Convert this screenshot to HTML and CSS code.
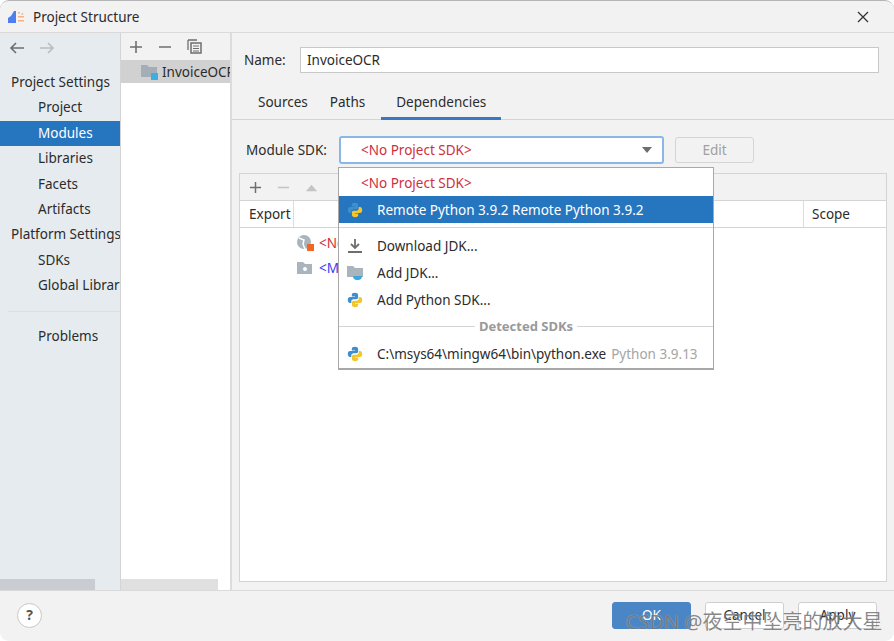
FILE: index.html
```html
<!DOCTYPE html>
<html lang="en">
<head>
    <meta charset="UTF-8">
    <meta name="viewport" content="width=device-width, initial-scale=1.0">
    <title>Project Structure</title>
    <link rel="stylesheet" href="styles.css">
</head>
<body>
    <svg class="defs" width="0" height="0">
        <symbol id="py" viewBox="0 0 16 16">
            <path fill="#3d8fd0" d="M8 .8C5.7.8 4.8 1.7 4.8 3v1.4H8V5H3C1.7 5 .8 6.2.8 8s.9 3 2.2 3h1.3V9.4c0-1.2 1-2.2 2.2-2.2h3c.9 0 1.6-.7 1.6-1.6V3C10.900 1.700 10 .8 8 .8z"/>
            <path fill="#f5c52c" transform="rotate(180 8 8)" d="M8 .8C5.700.8 4.800 1.700 4.800 3v1.400H8V5H3C1.700 5 .8 6.200.8 8s.9 3 2.200 3h1.300V9.400c0-1.200 1-2.200 2.200-2.200h3c.9 0 1.600-.7 1.600-1.600V3C10.900 1.700 10 .8 8 .8z"/>
        </symbol>
    </svg>

    <div class="window">
        <div class="titlebar">
            <svg class="app-icon" width="18" height="14" viewBox="0 0 18 14">
                <path fill="#4d7ff0" d="M1 13V8l3-2 3-5h2v12z"/>
                <path fill="#f4b183" d="M11 2h2v1.500h-2zM14 4l2-1 .7 1-2 1zM11 6h6v1.500h-6zM11 10h6v1.500h-6z"/>
            </svg>
            <span class="title">Project Structure</span>
            <svg class="close" width="14" height="14" viewBox="0 0 14 14">
                <path d="M2 2l10 10M12 2L2 12" stroke="#333" stroke-width="1.300" fill="none"/>
            </svg>
        </div>

        <div class="main">
            <div class="sidebar">
                <div class="history">
                    <svg width="16" height="14" viewBox="0 0 16 14"><path d="M15 7H2M7 2L2 7l5 5" stroke="#6e6e6e" stroke-width="1.600" fill="none"/></svg>
                    <svg width="16" height="14" viewBox="0 0 16 14"><path d="M1 7h13M9 2l5 5-5 5" stroke="#b9bdc2" stroke-width="1.600" fill="none"/></svg>
                </div>
                <div class="nav">
                    <div class="nav-head">Project Settings</div>
                    <div class="nav-item">Project</div>
                    <div class="nav-item selected">Modules</div>
                    <div class="nav-item">Libraries</div>
                    <div class="nav-item">Facets</div>
                    <div class="nav-item">Artifacts</div>
                    <div class="nav-head">Platform Settings</div>
                    <div class="nav-item">SDKs</div>
                    <div class="nav-item">Global Libraries</div>
                    <div class="nav-sep"></div>
                    <div class="nav-item">Problems</div>
                </div>
                <div class="scroll"><div class="scroll-thumb side-thumb"></div></div>
            </div>

            <div class="modules">
                <div class="mod-tools">
                    <svg width="14" height="14" viewBox="0 0 14 14"><path d="M7 1v12M1 7h12" stroke="#6e6e6e" stroke-width="1.600"/></svg>
                    <svg width="14" height="14" viewBox="0 0 14 14"><path d="M1 7h12" stroke="#6e6e6e" stroke-width="1.600"/></svg>
                    <svg width="15" height="15" viewBox="0 0 15 15"><path d="M1 1h9M1 1v10" stroke="#6e6e6e" stroke-width="1.300" fill="none"/><path fill="none" stroke="#6e6e6e" stroke-width="1.500" d="M4 4h10v10H4z"/><path d="M6 7h6M6 9.500h6M6 12h6" stroke="#6e6e6e"/></svg>
                </div>
                <div class="mod-row">
                    <svg width="9" height="13" viewBox="0 0 9 13"><path d="M1.500 1l6 5.500-6 5.500" stroke="#9a9a9a" stroke-width="1.300" fill="none"/></svg>
                    <svg class="mod-icon" width="17" height="16" viewBox="0 0 17 16"><path fill="#a3aeb7" d="M0 1h6l2 2h8v10H0z"/><path fill="#3daee0" d="M10 9h7v7h-7z"/></svg>
                    <span class="mod-name">InvoiceOCR</span>
                </div>
                <div class="mod-fill"></div>
                <div class="scroll"><div class="scroll-thumb mod-thumb"></div></div>
            </div>

            <div class="detail">
                <div class="name-row">
                    <label>Name:</label>
                    <div class="name-input">InvoiceOCR</div>
                </div>
                <div class="tabs">
                    <span class="tab">Sources</span>
                    <span class="tab">Paths</span>
                    <span class="tab active">Dependencies</span>
                </div>
                <div class="sdk-row">
                    <label>Module SDK:</label>
                    <div class="combo">
                        <span class="red">&lt;No Project SDK&gt;</span>
                        <span class="combo-arrow"></span>
                    </div>
                    <div class="edit-btn">Edit</div>
                </div>
                <div class="table">
                    <div class="table-tools">
                        <svg width="13" height="13" viewBox="0 0 14 14"><path d="M7 1v12M1 7h12" stroke="#6e6e6e" stroke-width="1.600"/></svg>
                        <svg width="13" height="13" viewBox="0 0 14 14"><path d="M1 7h12" stroke="#c4c4c4" stroke-width="1.600"/></svg>
                        <svg width="13" height="13" viewBox="0 0 14 14"><path d="M1 11l6-7 6 7z" fill="#c4c4c4"/></svg>
                    </div>
                    <div class="table-head">
                        <span class="col-export">Export</span>
                        <span class="col-mid"></span>
                        <span class="col-scope">Scope</span>
                    </div>
                    <div class="table-row">
                        <svg width="18" height="17" viewBox="0 0 18 17"><circle cx="8" cy="8" r="7" fill="#a9b4bc"/><path d="M3 4l5 2-1 4 2 5" stroke="#fff" stroke-width="1.500" fill="none"/><path fill="#f26522" d="M11 10h7v7h-7z"/></svg>
                        <span class="red">&lt;No Project SDK&gt;</span>
                    </div>
                    <div class="table-row">
                        <svg width="18" height="14" viewBox="0 0 18 14"><path fill="#a9b4bc" d="M1 1h6l2 2h7v10H1z"/><circle cx="9" cy="8" r="2" fill="#fff"/></svg>
                        <span class="blue">&lt;Module source&gt;</span>
                    </div>
                </div>
            </div>
        </div>

        <div class="footer">
            <div class="help">?</div>
            <div class="btn primary">OK</div>
            <div class="btn">Cancel</div>
            <div class="btn">Apply</div>
        </div>

        <div class="popup">
            <div class="pop-item first"><span class="red">&lt;No Project SDK&gt;</span></div>
            <div class="pop-item current">
                <svg width="16" height="16"><use href="#py"/></svg>
                <span>Remote Python 3.9.2 Remote Python 3.9.2</span>
            </div>
            <div class="pop-sep"></div>
            <div class="pop-item">
                <svg width="16" height="16" viewBox="0 0 16 16"><path d="M8 1v8M4 6l4 4 4-4" stroke="#6e6e6e" stroke-width="1.800" fill="none"/><path d="M1 14h14" stroke="#6e6e6e" stroke-width="1.800"/></svg>
                <span>Download JDK...</span>
            </div>
            <div class="pop-item">
                <svg width="16" height="16" viewBox="0 0 16 16"><path fill="#a9b4bc" d="M0 1h6l2 2h8v9H0z"/><path fill="#3ba7dc" d="M6 11h9c0 2.500-1.500 4-4 4H10c-2.500 0-4-1.500-4-4z"/></svg>
                <span>Add JDK...</span>
            </div>
            <div class="pop-item">
                <svg width="16" height="16"><use href="#py"/></svg>
                <span>Add Python SDK...</span>
            </div>
            <div class="pop-group"><span>Detected SDKs</span></div>
            <div class="pop-item">
                <svg width="16" height="16"><use href="#py"/></svg>
                <span>C:\msys64\mingw64\bin\python.exe</span>
                <span class="muted">Python 3.9.13</span>
            </div>
        </div>

        <div class="watermark">CSDN @夜空中坠亮的放大星</div>
    </div>
</body>
</html>
```

FILE: styles.css
```css
* {
    box-sizing: border-box;
}
html, body {
    margin: 0;
    padding: 0;
    background: #ffffff;
}
body {
    font-family: "Noto Sans", "Noto Sans CJK SC", sans-serif;
    font-size: 13.500px;
    color: #2b2b2b;
    overflow: hidden;
}
.defs {
    position: absolute;
}
.window {
    position: relative;
    width: 894px;
    height: 641px;
    display: flex;
    flex-direction: column;
    background: #f2f2f2;
    border-top: 1px solid #b5b5b5;
    border-radius: 9px;
    overflow: hidden;
}
.titlebar {
    height: 32px;
    flex: none;
    display: flex;
    align-items: center;
    padding: 0 24px 0 7px;
    border-bottom: 1px solid #dadada;
}
.app-icon {
    margin-right: 8px;
}
.title {
    flex: 1;
}
.main {
    height: 557px;
    flex: none;
    display: flex;
}

/* left nav */
.sidebar {
    width: 121px;
    flex: none;
    display: flex;
    flex-direction: column;
    background: #e6ebf0;
    border-right: 1px solid #d4d4d4;
}
.history {
    height: 37px;
    display: flex;
    align-items: center;
    gap: 14px;
    padding: 0 0 8px 9px;
}
.nav {
    flex: 1;
    overflow: hidden;
    white-space: nowrap;
}
.nav-head, .nav-item {
    height: 25.400px;
    line-height: 25.400px;
}
.nav-head {
    padding-left: 11px;
}
.nav-item {
    padding-left: 38px;
}
.nav-item.selected {
    background: #2675bf;
    color: #ffffff;
}
.nav-sep {
    height: 1px;
    margin: 12px 0 12px 8px;
    background: #dcdfe3;
}
.scroll {
    height: 11px;
    flex: none;
}
.scroll-thumb {
    height: 11px;
}
.side-thumb {
    width: 95px;
    background: #c9cdd3;
}

/* module list */
.modules {
    width: 111px;
    flex: none;
    display: flex;
    flex-direction: column;
    background: #ffffff;
    border-right: 2px solid #dcdcdc;
}
.mod-tools {
    height: 27px;
    display: flex;
    align-items: center;
    gap: 15px;
    padding-left: 8px;
    background: #f2f2f2;
}
.mod-row {
    height: 23px;
    display: flex;
    align-items: center;
    padding-left: 8px;
    background: #d1d1d1;
    white-space: nowrap;
    overflow: hidden;
}
.mod-icon {
    margin: 0 4px 0 12px;
    flex: none;
}
.mod-fill {
    flex: 1;
}
.mod-thumb {
    width: 97px;
    background: #e0e0e0;
}

/* right side */
.detail {
    flex: 1;
    min-width: 0;
}
.name-row {
    display: flex;
    align-items: center;
    height: 26px;
    margin: 14px 15px 0 12px;
}
.name-row label {
    width: 56px;
}
.name-input {
    flex: 1;
    height: 26px;
    line-height: 24px;
    padding-left: 6px;
    background: #ffffff;
    border: 1px solid #c8c8c8;
}
.tabs {
    height: 47px;
    display: flex;
    align-items: flex-end;
    padding-left: 15px;
    border-bottom: 1px solid #d4d4d4;
}
.tab {
    height: 31px;
    line-height: 26px;
    padding: 0 11px;
    margin-bottom: -1px;
}
.tab.active {
    border-bottom: 3px solid #3a78c2;
    padding: 0 15px;
    margin-left: 5px;
}
.sdk-row {
    display: flex;
    align-items: center;
    height: 28px;
    margin: 16px 0 0 14px;
}
.sdk-row label {
    width: 93px;
}
.combo {
    width: 325px;
    height: 28px;
    line-height: 24px;
    display: flex;
    justify-content: space-between;
    align-items: center;
    padding: 0 10px 0 20px;
    background: #ffffff;
    border: 2px solid #8ab7e8;
    border-radius: 3px;
}
.combo-arrow {
    width: 0;
    height: 0;
    border: 5px solid transparent;
    border-top: 6px solid #6e6e6e;
    border-bottom: none;
}
.edit-btn {
    width: 79px;
    height: 26px;
    line-height: 25px;
    margin-left: 11px;
    text-align: center;
    color: #a0a0a0;
    background: #f2f2f2;
    border: 1px solid #d5d5d5;
    border-radius: 3px;
}
.table {
    height: 409px;
    margin: 9px 7px 0 7px;
    background: #ffffff;
    border: 1px solid #d4d4d4;
}
.table-tools {
    height: 27px;
    display: flex;
    align-items: center;
    gap: 15px;
    padding-left: 9px;
    background: #f2f2f2;
    border-bottom: 1px solid #d4d4d4;
}
.table-head {
    height: 27px;
    line-height: 26px;
    display: flex;
    margin-bottom: 2px;
    border-bottom: 1px solid #d4d4d4;
}
.col-export {
    width: 54px;
    padding-left: 9px;
    border-right: 1px solid #dcdcdc;
}
.col-mid {
    flex: 1;
    border-right: 1px solid #dcdcdc;
}
.col-scope {
    width: 82px;
    padding-left: 8px;
}
.table-row {
    height: 25px;
    display: flex;
    align-items: center;
    gap: 5px;
    padding-left: 56px;
    white-space: nowrap;
}
.red {
    color: #cf2f3d;
}
.blue {
    color: #3a3af0;
}

/* bottom bar */
.footer {
    flex: 1;
    display: flex;
    align-items: center;
    gap: 14px;
    padding: 0 17px 2px 17px;
    border-top: 1px solid #dadada;
}
.help {
    width: 25px;
    height: 25px;
    line-height: 22px;
    margin-right: auto;
    text-align: center;
    font-weight: bold;
    font-size: 14px;
    color: #555555;
    background: #ffffff;
    border: 1px solid #c8c8c8;
    border-radius: 50%;
}
.btn {
    width: 79px;
    height: 27px;
    line-height: 25px;
    text-align: center;
    background: #ffffff;
    border: 1px solid #cfcfcf;
    border-radius: 3px;
}
.btn.primary {
    color: #ffffff;
    background: #4a86c5;
    border-color: #4a86c5;
}

/* dropdown over the combo */
.popup {
    position: absolute;
    left: 338px;
    top: 166px;
    width: 376px;
    height: 203px;
    padding-top: 1px;
    background: #ffffff;
    border: 1px solid #a8a8a8;
    border-bottom-width: 2px;
}
.pop-item {
    height: 27px;
    display: flex;
    align-items: center;
    gap: 5px;
    padding-left: 8px;
    white-space: nowrap;
}
.pop-item > svg {
    margin-right: 0;
    flex: none;
}
.pop-item > span:first-of-type {
    margin-left: 9px;
}
.pop-item.first {
    padding-left: 13px;
}
.pop-item.current {
    color: #ffffff;
    background: #2675bf;
}
.pop-sep {
    height: 9px;
    margin: 0;
    background: linear-gradient(#d4d4d4, #d4d4d4) center / 100% 1px no-repeat;
}
.pop-group {
    height: 27px;
    line-height: 27px;
    text-align: center;
    background: linear-gradient(#d4d4d4, #d4d4d4) center / 100% 1px no-repeat;
}
.pop-group span {
    padding: 0 4px;
    font-weight: bold;
    font-size: 13px;
    color: #999999;
    background: #ffffff;
}
.muted {
    color: #a5a5a5;
}

.watermark {
    position: absolute;
    left: 626px;
    top: 608px;
    font-size: 20px;
    line-height: 26px;
    white-space: nowrap;
    color: rgba(90, 90, 90, 0.72);
    text-shadow: 0 0 1px rgba(255, 255, 255, 0.6);
}
```
